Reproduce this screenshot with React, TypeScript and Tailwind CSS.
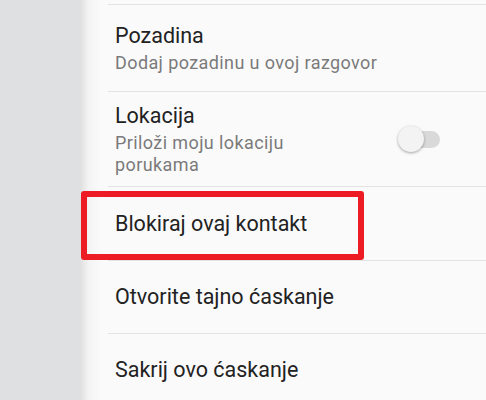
import React from "react";

const font = { fontFamily: "Roboto, 'Noto Sans', sans-serif" };

function Row({ title, sub, h, toggle }: { title: string; sub?: string; h: string; toggle?: boolean }) {
  return (
    <div className={`ml-[27px] border-t border-[#e3e3e3] flex items-center pl-[7px] pr-[44px] ${h}`}>
      <div className="flex-1 flex flex-col">
        <div className="text-[21.5px] leading-[28px] text-[#222222]">{title}</div>
        {sub && (
          <div className={`text-[18px] tracking-[0.4px] leading-[22px] text-[#7a7a7a] mt-[2px] ${toggle ? "w-[220px]" : ""}`}>{sub}</div>
        )}
      </div>
      {toggle && (
        <div className="relative w-[44px] h-[26px] flex items-center">
          <div className="ml-[6px] w-[36px] h-[17px] rounded-full bg-[#d9d9d9]" />
          <div className="absolute left-0 top-0 w-[26px] h-[26px] rounded-full bg-[#f3f3f3] shadow-[0_1px_3px_rgba(0,0,0,0.35)]" />
        </div>
      )}
    </div>
  );
}

export default function App() {
  return (
    <div className="flex w-[486px] h-[400px] overflow-hidden bg-[#dfe0e2]" style={font}>
      <div className="w-[81px] shrink-0 bg-[#dfe0e2]" />
      <div className="relative flex-1 bg-[linear-gradient(to_right,#e2e2e2,#f4f4f4_8px,#fafafa_20px)]">
        <div className="h-[4px]" />
        <Row h="h-[87px]" title="Pozadina" sub="Dodaj pozadinu u ovoj razgovor" />
        <Row h="h-[95px]" title="Lokacija" sub="Priloži moju lokaciju porukama" toggle />
        <Row h="h-[74px]" title="Blokiraj ovaj kontakt" />
        <Row h="h-[73px]" title="Otvorite tajno ćaskanje" />
        <Row h="h-[73px]" title="Sakrij ovo ćaskanje" />
        <div className="absolute left-0 top-[191px] w-[283px] h-[69px] border-[6px] border-[#ed1c24] rounded-[3px]" />
      </div>
    </div>
  );
}
